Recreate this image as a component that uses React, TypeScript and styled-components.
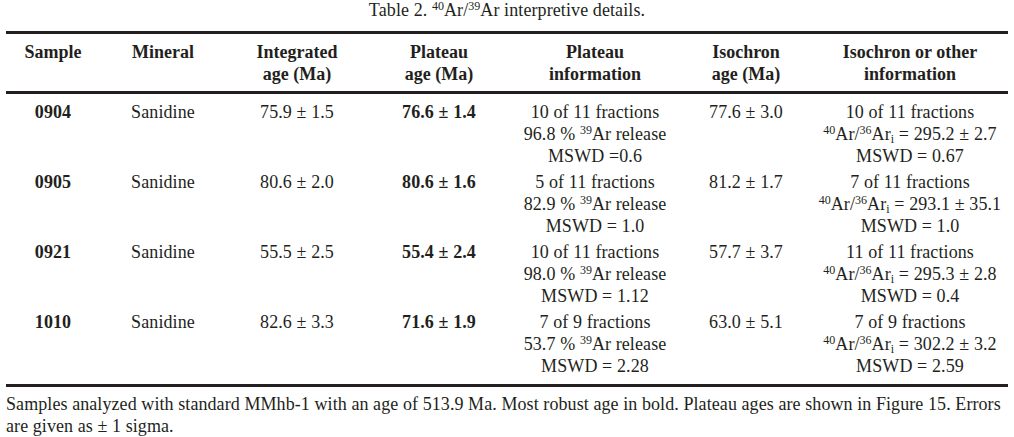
import React from "react";
import styled, { createGlobalStyle } from "styled-components";

const GlobalStyle = createGlobalStyle`
  html, body {
    margin: 0;
    padding: 0;
    background: #ffffff;
  }
  body {
    font-family: "Liberation Serif", "Times New Roman", serif;
    color: #231f20;
  }
`;

const COLUMNS = "94px 126px 142px 142px 170px 132px 196px";

const Page = styled.div`
  width: 1002px;
  padding: 0 6px;
`;

const Caption = styled.div`
  font-size: 18px;
  line-height: 20px;
  text-align: center;
  margin-bottom: 11px;
  letter-spacing: 0.1px;
`;

const Head = styled.div`
  display: grid;
  grid-template-columns: ${COLUMNS};
  border-top: 3px solid #231f20;
  border-bottom: 3px solid #231f20;
  padding: 7px 0 6px;
`;

const HeadCell = styled.div`
  font-size: 18px;
  line-height: 22px;
  font-weight: bold;
  text-align: center;
`;

const Body = styled.div`
  padding: 5px 0;
  border-bottom: 3px solid #231f20;
`;

const Row = styled.div`
  display: grid;
  grid-template-columns: ${COLUMNS};
  padding: 2px 0;
`;

const Cell = styled.div<{ $bold?: boolean }>`
  font-size: 18px;
  line-height: 22px;
  text-align: center;
  white-space: nowrap;
  letter-spacing: 0.1px;
  font-weight: ${(p) => (p.$bold ? "bold" : "normal")};
`;

const Sup = styled.sup`
  font-size: 12px;
  line-height: 0;
  vertical-align: 6px;
  letter-spacing: 0;
`;

const Sub = styled.sub`
  font-size: 12px;
  line-height: 0;
  vertical-align: -3px;
`;

const Footnote = styled.div`
  margin-top: 6px;
  font-size: 18px;
  line-height: 22px;
  letter-spacing: 0.08px;
`;

const FootLine = styled.div`
  white-space: nowrap;
`;

type Sample = {
  id: string;
  mineral: string;
  integrated: string;
  plateau: string;
  plateauInfo: [string, string, string];
  isochron: string;
  isoInfo: [string, string, string];
};

const samples: Sample[] = [
  {
    id: "0904",
    mineral: "Sanidine",
    integrated: "75.9 ± 1.5",
    plateau: "76.6 ± 1.4",
    plateauInfo: ["10 of 11 fractions", "96.8", "MSWD =0.6"],
    isochron: "77.6 ± 3.0",
    isoInfo: ["10 of 11 fractions", "295.2 ± 2.7", "MSWD = 0.67"],
  },
  {
    id: "0905",
    mineral: "Sanidine",
    integrated: "80.6 ± 2.0",
    plateau: "80.6 ± 1.6",
    plateauInfo: ["5 of 11 fractions", "82.9", "MSWD = 1.0"],
    isochron: "81.2 ± 1.7",
    isoInfo: ["7 of 11 fractions", "293.1 ± 35.1", "MSWD = 1.0"],
  },
  {
    id: "0921",
    mineral: "Sanidine",
    integrated: "55.5 ± 2.5",
    plateau: "55.4 ± 2.4",
    plateauInfo: ["10 of 11 fractions", "98.0", "MSWD = 1.12"],
    isochron: "57.7 ± 3.7",
    isoInfo: ["11 of 11 fractions", "295.3 ± 2.8", "MSWD = 0.4"],
  },
  {
    id: "1010",
    mineral: "Sanidine",
    integrated: "82.6 ± 3.3",
    plateau: "71.6 ± 1.9",
    plateauInfo: ["7 of 9 fractions", "53.7", "MSWD = 2.28"],
    isochron: "63.0 ± 5.1",
    isoInfo: ["7 of 9 fractions", "302.2 ± 3.2", "MSWD = 2.59"],
  },
];

const App = () => {
  return (
    <Page>
      <GlobalStyle />
      <Caption>
        Table 2. <Sup>40</Sup>Ar/<Sup>39</Sup>Ar interpretive details.
      </Caption>

      <Head>
        <HeadCell>Sample</HeadCell>
        <HeadCell>Mineral</HeadCell>
        <HeadCell>
          Integrated
          <br />
          age (Ma)
        </HeadCell>
        <HeadCell>
          Plateau
          <br />
          age (Ma)
        </HeadCell>
        <HeadCell>
          Plateau
          <br />
          information
        </HeadCell>
        <HeadCell>
          Isochron
          <br />
          age (Ma)
        </HeadCell>
        <HeadCell>
          Isochron or other
          <br />
          information
        </HeadCell>
      </Head>

      <Body>
        {samples.map((s) => (
          <Row key={s.id}>
            <Cell $bold>{s.id}</Cell>
            <Cell>{s.mineral}</Cell>
            <Cell>{s.integrated}</Cell>
            <Cell $bold>{s.plateau}</Cell>
            <Cell>
              {s.plateauInfo[0]}
              <br />
              {s.plateauInfo[1]} % <Sup>39</Sup>Ar release
              <br />
              {s.plateauInfo[2]}
            </Cell>
            <Cell>{s.isochron}</Cell>
            <Cell>
              {s.isoInfo[0]}
              <br />
              <Sup>40</Sup>Ar/<Sup>36</Sup>Ar<Sub>i</Sub> = {s.isoInfo[1]}
              <br />
              {s.isoInfo[2]}
            </Cell>
          </Row>
        ))}
      </Body>

      {/* notes under the table */}
      <Footnote>
        <FootLine>
          Samples analyzed with standard MMhb-1 with an age of 513.9 Ma. Most robust age in bold.
          Plateau ages are shown in Figure 15. Errors
        </FootLine>
        <FootLine>are given as ± 1 sigma.</FootLine>
      </Footnote>
    </Page>
  );
};

export default App;
